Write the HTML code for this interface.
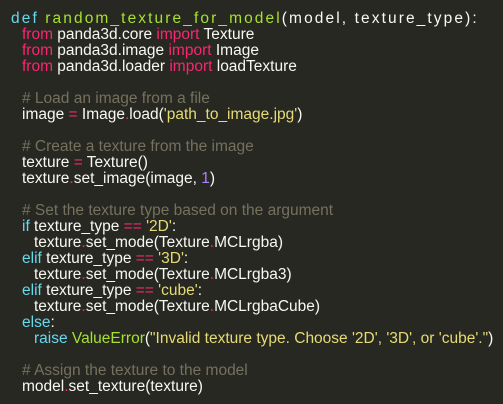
<!DOCTYPE html>
<html><head><meta charset="utf-8"><style>
html,body{margin:0;padding:0;}
body{width:503px;height:404px;background:#272822;overflow:hidden;}
.w{position:absolute;left:11px;top:11px;font-family:"Liberation Sans",sans-serif;font-size:15.5px;line-height:16px;color:#f8f8f2;}
.w div{height:16px;white-space:pre;}
.i1{padding-left:11px}.i2{padding-left:23px}
.k{color:#f92672}.d{color:#66d9ef}.f{color:#a6e22e}.s{color:#e6db74}.c{color:#75715e}.n{color:#ae81ff}
</style></head><body>
<div class="w"><div style="letter-spacing:2.1px"><span class="d">def</span> <span class="f">random_texture_for_model</span>(model, texture_type):</div><div class="i1"><span class="k">from</span> panda3d.core <span class="k">import</span> Texture</div><div class="i1"><span class="k">from</span> panda3d.image <span class="k">import</span> Image</div><div class="i1"><span class="k">from</span> panda3d.loader <span class="k">import</span> loadTexture</div><div></div><div class="i1"><span class="c"># Load an image from a file</span></div><div class="i1">image <span class="k">=</span> Image<span class="k">.</span>load(<span class="s">'path_to_image.jpg'</span>)</div><div></div><div class="i1"><span class="c"># Create a texture from the image</span></div><div class="i1">texture <span class="k">=</span> Texture()</div><div class="i1">texture<span class="k">.</span>set_image(image, <span class="n">1</span>)</div><div></div><div class="i1"><span class="c"># Set the texture type based on the argument</span></div><div class="i1"><span class="d">if</span> texture_type <span class="k">==</span> <span class="s">'2D'</span>:</div><div class="i2">texture<span class="k">.</span>set_mode(Texture<span class="k">.</span>MCLrgba)</div><div class="i1"><span class="d">elif</span> texture_type <span class="k">==</span> <span class="s">'3D'</span>:</div><div class="i2">texture<span class="k">.</span>set_mode(Texture<span class="k">.</span>MCLrgba3)</div><div class="i1"><span class="d">elif</span> texture_type <span class="k">==</span> <span class="s">'cube'</span>:</div><div class="i2">texture<span class="k">.</span>set_mode(Texture<span class="k">.</span>MCLrgbaCube)</div><div class="i1"><span class="d">else</span>:</div><div class="i2"><span class="d">raise</span> <span class="f">ValueError</span>(<span class="s">"Invalid texture type. Choose '2D', '3D', or 'cube'."</span>)</div><div></div><div class="i1"><span class="c"># Assign the texture to the model</span></div><div class="i1">model<span class="k">.</span>set_texture(texture)</div></div>
</body></html>
